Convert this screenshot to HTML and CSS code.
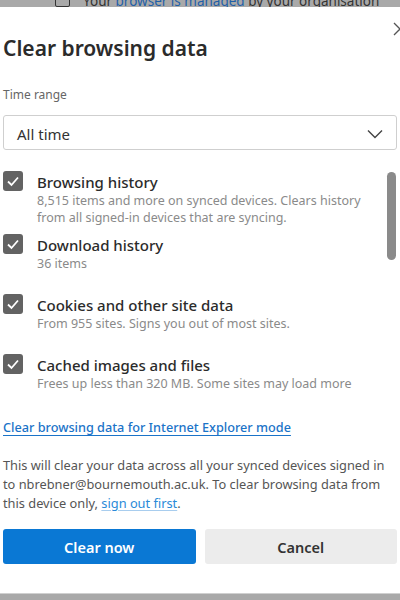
FILE: index.html
```html
<!DOCTYPE html>
<html lang="en">
<head>
    <meta charset="UTF-8">
    <title>Clear browsing data</title>
    <link rel="stylesheet" href="styles.css">
</head>
<body>
    <!-- Managed notice behind the dialog -->
    <div class="managed-bar">
        <span class="managed-box"></span>
        <span class="managed-text">Your <a href="#">browser is managed</a> by your organisation</span>
    </div>

    <!-- Dialog -->
    <main class="dialog">
        <div class="dialog-header">
            <h1>Clear browsing data</h1>
            <svg class="close-icon" width="14" height="14" viewBox="0 0 14 14">
                <path d="M1 1 L13 13 M13 1 L1 13" stroke="#555" stroke-width="1.3" fill="none"/>
            </svg>
        </div>

        <label class="field-label">Time range</label>
        <div class="select-box">
            <span>All time</span>
            <svg width="16" height="10" viewBox="0 0 16 10">
                <path d="M1 1.5 L8 8.5 L15 1.5" stroke="#444" stroke-width="1.4" fill="none"/>
            </svg>
        </div>

        <div class="options">
            <div class="scrollbar"></div>

            <div class="option">
                <span class="check">
                    <svg width="20" height="20" viewBox="0 0 20 20"><path d="M5 10.5 L8.5 14 L15 6.5" stroke="#fff" stroke-width="1.8" fill="none"/></svg>
                </span>
                <div class="option-text">
                    <h3>Browsing history</h3>
                    <p>8,515 items and more on synced devices. Clears history from all signed-in devices that are syncing.</p>
                </div>
            </div>

            <div class="option">
                <span class="check">
                    <svg width="20" height="20" viewBox="0 0 20 20"><path d="M5 10.5 L8.5 14 L15 6.5" stroke="#fff" stroke-width="1.8" fill="none"/></svg>
                </span>
                <div class="option-text">
                    <h3>Download history</h3>
                    <p>36 items</p>
                </div>
            </div>

            <div class="option">
                <span class="check">
                    <svg width="20" height="20" viewBox="0 0 20 20"><path d="M5 10.5 L8.5 14 L15 6.5" stroke="#fff" stroke-width="1.8" fill="none"/></svg>
                </span>
                <div class="option-text">
                    <h3>Cookies and other site data</h3>
                    <p>From 955 sites. Signs you out of most sites.</p>
                </div>
            </div>

            <div class="option">
                <span class="check">
                    <svg width="20" height="20" viewBox="0 0 20 20"><path d="M5 10.5 L8.5 14 L15 6.5" stroke="#fff" stroke-width="1.8" fill="none"/></svg>
                </span>
                <div class="option-text">
                    <h3>Cached images and files</h3>
                    <p class="nowrap">Frees up less than 320 MB. Some sites may load more</p>
                </div>
            </div>
        </div>

        <a class="ie-link" href="#">Clear browsing data for Internet Explorer mode</a>

        <p class="sync-note">This will clear your data across all your synced devices signed in to nbrebner@bournemouth.ac.uk. To clear browsing data from this device only, <a href="#">sign out first</a>.</p>

        <div class="buttons">
            <button class="btn-primary">Clear now</button>
            <button class="btn-secondary">Cancel</button>
        </div>
    </main>

    <!-- Page text below the dialog -->
    <div class="page-bar">
        <span>had a history of cookies and more, and browsing data from your devices. Clear your data from</span>
    </div>
</body>
</html>
```

FILE: styles.css
```css
body {
    font-family: "Noto Sans", "Open Sans", sans-serif;
    margin: 0;
    padding: 0;
    width: 400px;
    height: 600px;
    overflow: hidden;
    background-color: white;
    color: #262626;
}

/* Top strip */
.managed-bar {
    height: 7px;
    background-color: #a9a9a9;
    overflow: hidden;
    display: flex;
    align-items: flex-end;
    padding-left: 55px;
    gap: 13px;
}

.managed-box {
    width: 13px;
    height: 13px;
    border: 1.5px solid #333;
    border-radius: 2px;
    flex-shrink: 0;
}

.managed-text {
    font-size: 13.5px;
    line-height: 14px;
    margin-bottom: -1px;
    color: #333;
    white-space: nowrap;
}

.managed-text a {
    color: #1f5fa8;
    text-decoration: none;
}

/* Dialog */
.dialog {
    padding: 0 3px;
    height: 586px;
}

.dialog-header {
    display: flex;
    justify-content: space-between;
    align-items: flex-start;
}

.dialog-header h1 {
    margin: 26px 0 0;
    font-size: 21px;
    line-height: 30px;
    font-weight: 600;
    color: #2b2b2b;
}

.close-icon {
    margin-top: 15px;
    margin-right: -10px;
}

.field-label {
    display: block;
    margin-top: 23px;
    font-size: 12px;
    line-height: 18px;
    color: #666;
}

.select-box {
    margin-top: 11px;
    height: 35px;
    box-sizing: border-box;
    border: 1px solid #cfcfcf;
    border-radius: 3px;
    display: flex;
    align-items: center;
    justify-content: space-between;
    padding: 2px 13px 0 13px;
    font-size: 15px;
    color: #333;
}

/* Checkbox list */
.options {
    position: relative;
    margin-top: 21px;
}

.scrollbar {
    position: absolute;
    right: 1px;
    top: 1px;
    width: 9px;
    height: 88px;
    border-radius: 5px;
    background-color: #8a8a8a;
}

.option {
    display: flex;
    min-height: 60px;
    box-sizing: border-box;
    padding-bottom: 8px;
}

.check {
    width: 20px;
    height: 20px;
    border-radius: 3px;
    background-color: #636363;
    flex-shrink: 0;
    margin-right: 14px;
}

.check svg {
    display: block;
}

.option-text {
    padding-right: 30px;
}

.option-text h3 {
    margin: 1px 0 0;
    font-size: 15px;
    line-height: 20px;
    font-weight: 500;
    color: #2b2b2b;
}

.option-text p {
    margin: 0;
    font-size: 12.5px;
    line-height: 17px;
    color: #8a8a8a;
}

.option-text p.nowrap {
    white-space: nowrap;
}

.ie-link {
    display: inline-block;
    margin-top: 3px;
    font-size: 12.7px;
    line-height: 20px;
    font-weight: 500;
    color: #1a73c8;
    text-decoration: underline;
    text-underline-offset: 3px;
}

.sync-note {
    margin: 19px 0 0;
    font-size: 12.8px;
    line-height: 19px;
    color: #555;
}

.sync-note a {
    color: #2a8ad8;
    text-decoration: underline;
    text-decoration-color: #a8cdee;
    text-underline-offset: 2px;
}

.buttons {
    display: flex;
    gap: 9px;
    margin-top: 16px;
}

.buttons button {
    flex: 1;
    height: 35px;
    border: none;
    border-radius: 3px;
    font-family: inherit;
    font-size: 14.5px;
    font-weight: 600;
    cursor: pointer;
}

.btn-primary {
    background-color: #0a78d4;
    color: white;
}

.btn-secondary {
    background-color: #ececec;
    color: #333;
}

/* Bottom strip */
.page-bar {
    height: 7px;
    background-color: #a9a9a9;
    border-top: 1px solid #d0d0d0;
    overflow: hidden;
    padding-left: 2px;
    white-space: nowrap;
    font-size: 15px;
    line-height: 22px;
    color: #333;
}
```
